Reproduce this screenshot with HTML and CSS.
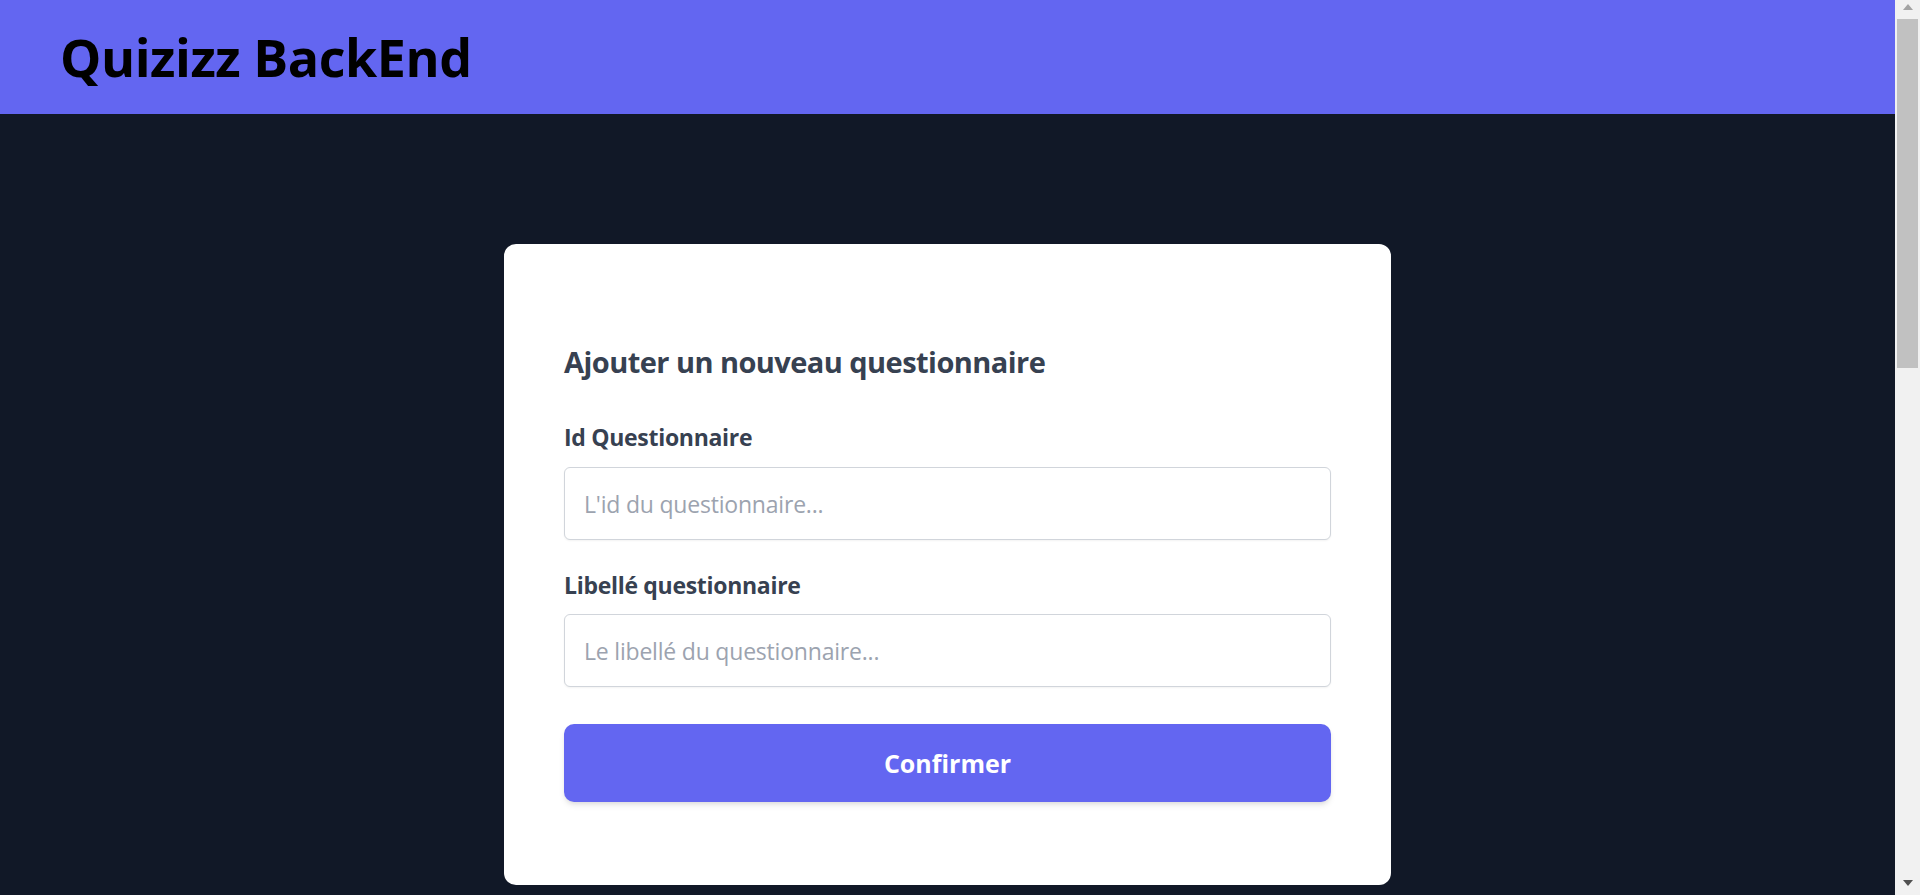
FILE: index.html
```html
<!DOCTYPE html>
<html lang="fr">
<head>
<meta charset="utf-8">
<title>Quizizz BackEnd</title>
<link rel="stylesheet" href="styles.css">
</head>
<body>
<div class="page">
  <header class="topbar">
    <h1 class="brand">Quizizz BackEnd</h1>
  </header>
  <main class="content">
    <form class="card">
      <h2 class="card-title">Ajouter un nouveau questionnaire</h2>
      <label class="field-label" for="idq">Id Questionnaire</label>
      <input class="field-input" id="idq" type="text" placeholder="L'id du questionnaire...">
      <label class="field-label second" for="lib">Libellé questionnaire</label>
      <input class="field-input" id="lib" type="text" placeholder="Le libellé du questionnaire...">
      <button class="submit" type="button">Confirmer</button>
    </form>
  </main>
</div>
<div class="scrollbar" aria-hidden="true">
  <div class="sb-btn"><span class="arrow-up"></span></div>
  <div class="sb-track"><div class="sb-thumb"></div></div>
  <div class="sb-btn bottom"><span class="arrow-down"></span></div>
</div>
</body>
</html>
```
FILE: styles.css
```css
html, body {
  margin: 0;
  padding: 0;
  height: 100%;
  overflow: hidden;
}
body {
  background: #111827;
  font-family: "Open Sans", "Noto Sans", sans-serif;
  display: flex;
}
.page {
  flex: 1;
  min-width: 0;
  height: 100vh;
  overflow: hidden;
}
.scrollbar {
  width: 25px;
  flex: none;
  height: 100vh;
  background: #f1f1f1;
  display: flex;
  flex-direction: column;
}
.sb-btn {
  height: 19px;
  display: flex;
  justify-content: center;
  align-items: flex-start;
  padding-top: 4px;
  box-sizing: border-box;
}
.sb-btn.bottom {
  align-items: flex-end;
  padding-top: 0;
  padding-bottom: 9px;
}
.arrow-up {
  width: 0;
  height: 0;
  border-left: 5.5px solid transparent;
  border-right: 5.5px solid transparent;
  border-bottom: 6px solid #a3a3a3;
}
.arrow-down {
  width: 0;
  height: 0;
  border-left: 5.5px solid transparent;
  border-right: 5.5px solid transparent;
  border-top: 6px solid #505050;
}
.sb-track {
  flex: 1;
  padding: 0 2px;
}
.sb-thumb {
  height: 349px;
  background: #c1c1c1;
}
.topbar {
  height: 114px;
  background: #6366f1;
  display: flex;
  align-items: center;
  padding-left: 60px;
  box-sizing: border-box;
}
.brand {
  margin: 0;
  font-size: 52px;
  font-weight: 700;
  color: #000;
  line-height: 1;
  letter-spacing: -0.45px;
}
.content {
  min-height: 2084px;
  padding-top: 130px;
  box-sizing: border-box;
}
.card {
  width: 887px;
  margin: 0 auto;
  background: #fff;
  border-radius: 12px;
  padding: 100px 60px 83px;
  box-sizing: border-box;
  display: flex;
  flex-direction: column;
}
.card-title {
  margin: 0 0 41px;
  font-size: 29px;
  line-height: 36px;
  font-weight: 700;
  color: #374151;
  letter-spacing: -0.55px;
}
.field-label {
  font-size: 23px;
  line-height: 32px;
  font-weight: 700;
  color: #374151;
  margin-bottom: 14px;
  letter-spacing: -0.3px;
}
.field-label.second {
  margin-top: 29px;
  margin-bottom: 13px;
}
.field-input {
  height: 73px;
  box-sizing: border-box;
  border: 1px solid #d1d5db;
  border-radius: 6px;
  padding: 0 19px;
  font-family: inherit;
  font-size: 23px;
  color: #374151;
  box-shadow: 0 1px 2px rgba(0, 0, 0, 0.05);
  outline: none;
  letter-spacing: -0.2px;
}
.field-input::placeholder {
  color: #9ca3af;
}
.submit {
  margin-top: 37px;
  height: 78px;
  border: none;
  border-radius: 10px;
  background: #6366f1;
  color: #fff;
  font-family: inherit;
  font-size: 25px;
  font-weight: 700;
  box-shadow: 0 4px 6px -1px rgba(0, 0, 0, 0.1), 0 2px 4px -1px rgba(0, 0, 0, 0.06);
  cursor: pointer;
}
```
